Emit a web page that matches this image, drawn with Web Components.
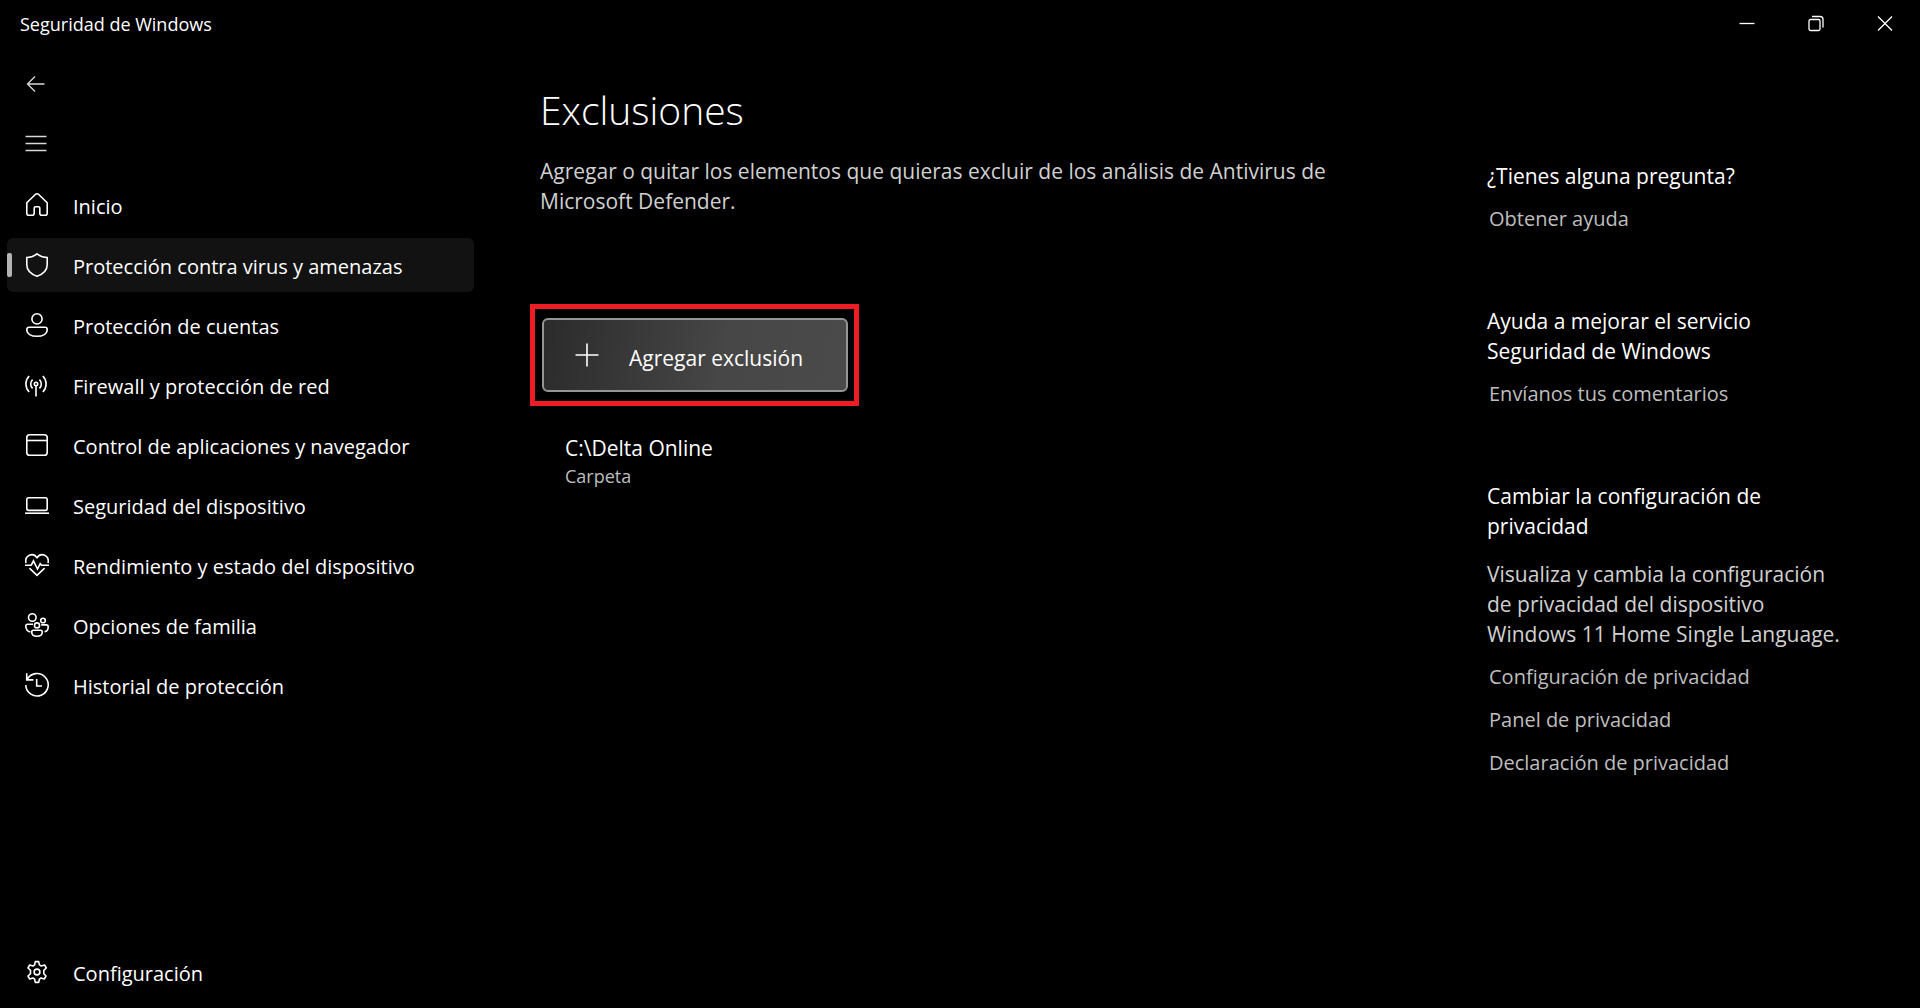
<!DOCTYPE html>
<html lang="es">
<head>
<meta charset="utf-8">
<meta name="viewport" content="width=device-width, initial-scale=1">
<title>Seguridad de Windows</title>
<style>
  html, body { margin: 0; background: #000; }
  body {
    color: #fff;
    font-family: "Open Sans", "Noto Sans", sans-serif;
    font-size: 20px;
  }
</style>
</head>
<body>

<ws-window>
  <ws-titlebar slot="title">Seguridad de Windows</ws-titlebar>

  <ws-nav slot="nav">
    <ws-nav-item icon="home">Inicio</ws-nav-item>
    <ws-nav-item icon="shield" active>Protección contra virus y amenazas</ws-nav-item>
    <ws-nav-item icon="account">Protección de cuentas</ws-nav-item>
    <ws-nav-item icon="antenna">Firewall y protección de red</ws-nav-item>
    <ws-nav-item icon="browser">Control de aplicaciones y navegador</ws-nav-item>
    <ws-nav-item icon="laptop">Seguridad del dispositivo</ws-nav-item>
    <ws-nav-item icon="heart">Rendimiento y estado del dispositivo</ws-nav-item>
    <ws-nav-item icon="family">Opciones de familia</ws-nav-item>
    <ws-nav-item icon="history">Historial de protección</ws-nav-item>
    <ws-nav-item slot="footer" icon="gear">Configuración</ws-nav-item>
  </ws-nav>

  <ws-page>
    <span slot="heading">Exclusiones</span>
    <span slot="description">Agregar o quitar los elementos que quieras excluir de los análisis de Antivirus de Microsoft Defender.</span>
    <ws-add-button>Agregar exclusión</ws-add-button>
    <ws-exclusion kind="Carpeta">C:\Delta Online</ws-exclusion>
  </ws-page>

  <ws-help slot="aside">
    <ws-help-section heading="¿Tienes alguna pregunta?">
      <ws-link>Obtener ayuda</ws-link>
    </ws-help-section>
    <ws-help-section heading="Ayuda a mejorar el servicio Seguridad de Windows">
      <ws-link>Envíanos tus comentarios</ws-link>
    </ws-help-section>
    <ws-help-section heading="Cambiar la configuración de privacidad">
      <span slot="text">Visualiza y cambia la configuración de privacidad del dispositivo Windows 11 Home Single Language.</span>
      <ws-link>Configuración de privacidad</ws-link>
      <ws-link>Panel de privacidad</ws-link>
      <ws-link>Declaración de privacidad</ws-link>
    </ws-help-section>
  </ws-help>
</ws-window>

<script>
const ICONS = {
  back: `<path d="M19.5 11H2.5M10 3.5 2.5 11l7.5 7.5"/>`,
  menu: `<path d="M.5 3.5h21M.5 10.5h21M.5 17.5h21"/>`,
  home: `<path d="M1.8 9.8 10.3 1.5a2.4 2.4 0 0 1 3.4 0l8.5 8.3V20.200a2 2 0 0 1-2 2h-3.400a2 2 0 0 1-2-2v-5.200a1.200 1.200 0 0 0-1.200-1.200h-3.200a1.200 1.200 0 0 0-1.200 1.200v5.200a2 2 0 0 1-2 2H3.800a2 2 0 0 1-2-2z"/>`,
  shield: `<path d="M12 .9c2.800 2.300 6 3.400 10.200 3.600v7.300c0 5.400-3.700 9.200-10.200 11.500C5.500 21 1.800 17.200 1.800 11.800V4.500C6 4.300 9.200 3.200 12 .9z"/>`,
  account: `<circle cx="12" cy="5.900" r="5.100"/><path d="M4 14.200h16a2.200 2.200 0 0 1 2.200 2.200c0 4.400-4.400 6.900-10.200 6.900S1.800 20.800 1.800 16.400A2.200 2.200 0 0 1 4 14.200z"/>`,
  antenna: `<circle cx="11" cy="11" r="1.700"/><path d="M11 12.700v10.800M7.600 6.600a6 6 0 0 0 0 8.800M14.400 6.600a6 6 0 0 1 0 8.800M4.200 3a11.300 11.300 0 0 0 0 16M17.800 3a11.300 11.300 0 0 1 0 16"/>`,
  browser: `<rect x="1.800" y="1.800" width="20.400" height="20.400" rx="2.800"/><path d="M1.800 7.500h20.400"/>`,
  laptop: `<rect x="1.800" y="4.800" width="20.400" height="12.600" rx="1.800"/><path d="M0 20.200h24"/>`,
  heart: `<path d="M.9 10.200C-.6 2.200 8-1 12 4.700 16-1 24.600 2.200 23.100 10.200M0 12.200h6.200l2.300-4.400 4 8.200 2.700-5.400 1.400 1.600H24M4.400 15.200 12 22.300l7.600-7.100"/>`,
  family: `<circle cx="7.300" cy="4.500" r="3.800"/><circle cx="18" cy="7.500" r="2.300"/><circle cx="12" cy="12.400" r="2.500"/><path d="M8 11.200H2.500a1.700 1.700 0 0 0-1.700 1.700c0 3.200 1.800 5.400 4.600 6.200M16.200 11.900h5a2 2 0 0 1 2 2c0 2.600-1.400 4.300-3.600 4.900M8.500 17.200h7a1.800 1.800 0 0 1 1.800 1.800c0 2.700-2.300 4.300-5.300 4.300S6.700 21.700 6.700 19a1.800 1.800 0 0 1 1.800-1.800z"/>`,
  history: `<path d="M1.700.3v6.600h6.700M2 6.700A11.200 11.200 0 1 1 .8 12M11.700 6v7h5.300"/>`,
  gear: `<circle cx="12" cy="12" r="2.900"/><path d="M10.300 1.600h3.400l.7 3.300 1.900 1.100 3.300-1 1.700 3-2.500 2.300v3.400L21 16l-1.700 3-3.300-1-1.600 1.100-.7 3.300h-3.400L9.600 19.100 8 18l-3.300 1L3 16l2.500-2.300v-3.400L3 8l1.700-3L8 6l1.600-1.100z" stroke-linejoin="round"/>`,
  plus: `<path d="M12 .5v23M.5 12h23"/>`,
  minimize: `<path d="M4.500 11.500h15"/>`,
  restore: `<rect x="5" y="7.500" width="11" height="11" rx="1.500"/><path d="M8 4.500h8a3 3 0 0 1 3 3v8"/>`,
  close: `<path d="m5 4.500 14 14M19 4.500l-14 14"/>`
};

// Base común: cada elemento define render() con sus estilos y su marcado
class WsElement extends HTMLElement {
  constructor() {
    super();
    this.attachShadow({ mode: "open" });
  }

  connectedCallback() {
    this.shadowRoot.innerHTML = this.render();
  }
}

customElements.define("ws-icon", class extends WsElement {
  render() {
    return `
      <style>
        :host { display: block; flex: none; width: 24px; height: 24px; }
        svg { display: block; overflow: visible; fill: none; stroke: currentColor; stroke-width: var(--ws-stroke, 1.6); }
      </style>
      <svg width="24" height="24" viewBox="0 0 24 24" aria-hidden="true">${ICONS[this.getAttribute("name")]}</svg>`;
  }
});

customElements.define("ws-window", class extends WsElement {
  render() {
    return `
      <style>
        :host { display: flex; flex-direction: column; min-height: 100vh; }
        .body { flex: 1; display: flex; }
        slot[name="nav"]::slotted(*) { flex: none; width: 474px; }
        main { flex: 1; min-width: 0; padding: 0 56px; }
        slot[name="aside"]::slotted(*) { flex: none; width: 366px; padding-right: 67px; }
      </style>
      <slot name="title"></slot>
      <div class="body">
        <slot name="nav"></slot>
        <main><slot></slot></main>
        <slot name="aside"></slot>
      </div>`;
  }
});

customElements.define("ws-titlebar", class extends WsElement {
  render() {
    return `
      <style>
        :host { display: flex; justify-content: space-between; align-items: center; height: 48px; font-size: 18px; }
        .name { padding-left: 20px; }
        .controls { display: flex; height: 100%; padding-right: 1px; --ws-stroke: 1.3; }
        button {
          width: 69px; display: flex; align-items: center; justify-content: center;
          padding: 0; border: 0; background: none; color: inherit;
        }
      </style>
      <span class="name"><slot></slot></span>
      <div class="controls">
        <button type="button" aria-label="Minimizar"><ws-icon name="minimize"></ws-icon></button>
        <button type="button" aria-label="Restaurar"><ws-icon name="restore"></ws-icon></button>
        <button type="button" aria-label="Cerrar"><ws-icon name="close"></ws-icon></button>
      </div>`;
  }
});

customElements.define("ws-nav", class extends WsElement {
  render() {
    return `
      <style>
        :host { display: flex; box-sizing: border-box; padding: 10px 0 9px 7px; }
        nav { flex: 1; display: flex; flex-direction: column; gap: 6px; }
        .tool {
          width: 60px; height: 54px; display: flex; align-items: center; padding: 0 0 0 18px;
          border: 0; background: none; color: #d8d8d8; --ws-stroke: 1.3;
        }
        .footer { margin-top: auto; }
      </style>
      <nav aria-label="Secciones">
        <button class="tool" type="button" aria-label="Atrás"><ws-icon name="back"></ws-icon></button>
        <button class="tool" type="button" aria-label="Menú"><ws-icon name="menu"></ws-icon></button>
        <slot></slot>
        <div class="footer"><slot name="footer"></slot></div>
      </nav>`;
  }
});

customElements.define("ws-nav-item", class extends WsElement {
  render() {
    return `
      <style>
        :host { display: block; }
        a {
          display: flex; align-items: center; gap: 24px; box-sizing: border-box; height: 54px;
          padding-left: 18px; border-radius: 6px; color: inherit; text-decoration: none;
        }
        .label { padding-top: 2px; }
        :host([active]) a { background: #121212; }
        :host([active]) a::before {
          content: ""; width: 5px; height: 24px; margin: 0 -11px 0 -18px;
          border-radius: 2px; background: #b4b4b4;
        }
      </style>
      <a href="#"${this.hasAttribute("active") ? ` aria-current="page"` : ""}>
        <ws-icon name="${this.getAttribute("icon")}"></ws-icon>
        <span class="label"><slot></slot></span>
      </a>`;
  }
});

customElements.define("ws-page", class extends WsElement {
  render() {
    return `
      <style>
        :host { display: block; padding-top: 36px; }
        header { padding-left: 10px; }
        h1 { margin: 0; font-size: 39px; font-weight: 300; line-height: 52px; }
        p { margin: 20px 0 0; max-width: 830px; font-size: 21px; line-height: 30px; color: #d0d0d0; }
        .content { padding-top: 88px; }
      </style>
      <header>
        <h1><slot name="heading"></slot></h1>
        <p><slot name="description"></slot></p>
      </header>
      <div class="content"><slot></slot></div>`;
  }
});

customElements.define("ws-add-button", class extends WsElement {
  render() {
    return `
      <style>
        :host { display: block; width: fit-content; padding: 9px 6px 9px 7px; border: 5px solid #ee1c24; }
        button {
          display: flex; align-items: center; gap: 30px; box-sizing: border-box;
          width: 306px; height: 74px; padding: 0 0 0 31px;
          border: 2px solid #959595; border-radius: 6px;
          background: linear-gradient(100deg, #2b2b2b, #474747 60%, #4a4a4a);
          color: #fff; font: inherit; font-size: 21px; --ws-stroke: 1.6;
        }
        .label { padding-top: 6px; }
      </style>
      <button type="button"><ws-icon name="plus"></ws-icon><span class="label"><slot></slot></span></button>`;
  }
});

customElements.define("ws-exclusion", class extends WsElement {
  render() {
    return `
      <style>
        :host { display: block; padding: 28px 0 0 35px; }
        .path { font-size: 21px; line-height: 28px; }
        .kind { font-size: 18px; line-height: 28px; color: #bebebe; }
      </style>
      <div class="path"><slot></slot></div>
      <div class="kind">${this.getAttribute("kind")}</div>`;
  }
});

customElements.define("ws-help", class extends WsElement {
  render() {
    return `
      <style>
        :host { display: flex; flex-direction: column; gap: 72px; padding-top: 113px; }
      </style>
      <slot></slot>`;
  }
});

customElements.define("ws-help-section", class extends WsElement {
  render() {
    return `
      <style>
        :host { display: flex; flex-direction: column; gap: 13px; }
        h2 { margin: 0; font-size: 21px; font-weight: 400; line-height: 30px; }
        slot[name="text"]::slotted(*) { margin-top: 5px; font-size: 21px; line-height: 30px; color: #d0d0d0; }
      </style>
      <h2>${this.getAttribute("heading")}</h2>
      <slot name="text"></slot>
      <slot></slot>`;
  }
});

customElements.define("ws-link", class extends WsElement {
  render() {
    return `
      <style>
        :host { display: block; padding-left: 2px; line-height: 30px; }
        a { color: #bebebe; text-decoration: none; }
      </style>
      <a href="#"><slot></slot></a>`;
  }
});
</script>
</body>
</html>
